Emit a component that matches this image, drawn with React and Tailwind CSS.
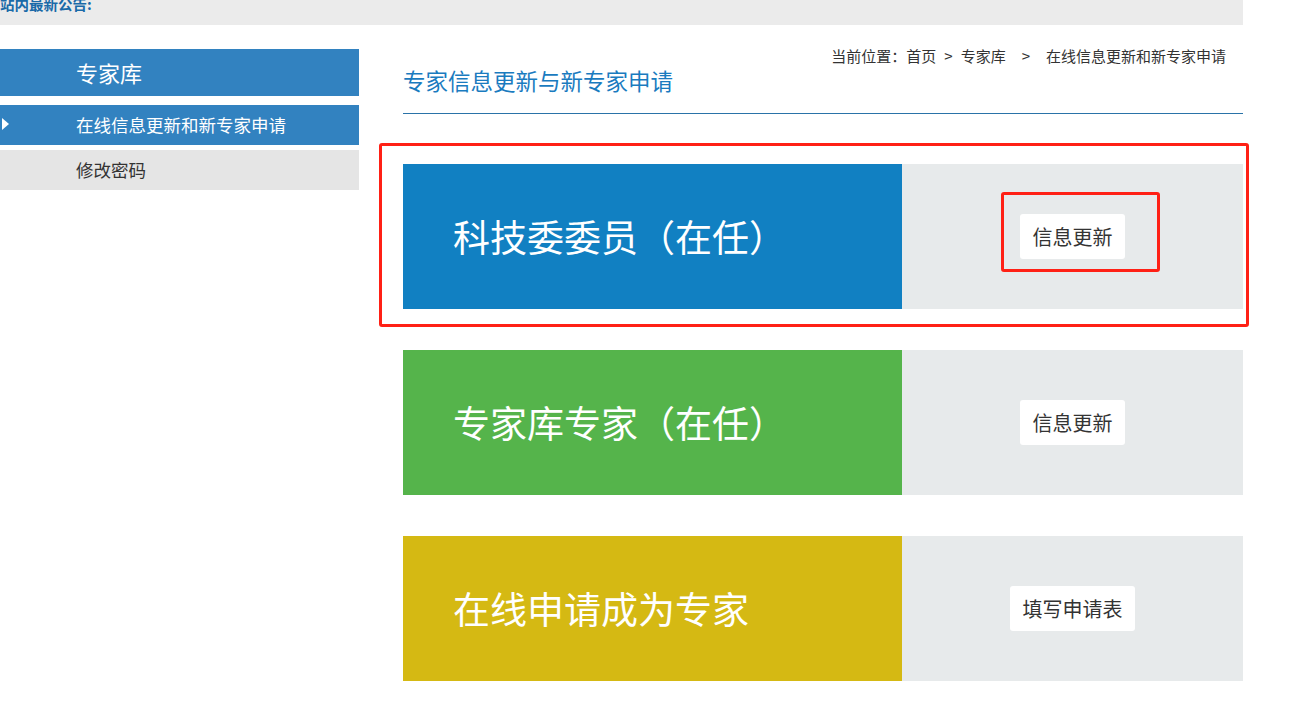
export default function App() {
  const font = { fontFamily: '"Microsoft YaHei", "Noto Sans CJK SC", "Noto Sans", sans-serif' };
  const cards = [
    { title: "科技委委员（在任）", color: "bg-[#1180c2]", btn: "信息更新", bw: "w-[105px]" },
    { title: "专家库专家（在任）", color: "bg-[#55b44b]", btn: "信息更新", bw: "w-[105px]" },
    { title: "在线申请成为专家", color: "bg-[#d5b913]", btn: "填写申请表", bw: "w-[125px]" },
  ];
  return (
    <div className="w-[1306px] h-[717px] bg-white overflow-hidden relative" style={font}>
      {/* top notice bar */}
      <div className="w-[1243px] h-[25px] bg-[#ebebeb] overflow-hidden">
        <div className="text-[14.5px] font-bold text-[#1a6aa8] leading-[14px] -mt-[3px]">站内最新公告:</div>
      </div>

      <div className="flex mt-[24px]">
        {/* sidebar */}
        <div className="w-[359px] shrink-0 flex flex-col">
          <div className="h-[47px] bg-[#3282c0] text-white text-[22px] flex items-center pl-[76px]">专家库</div>
          <div className="h-[40px] mt-[9px] bg-[#3282c0] text-white text-[17.5px] flex items-center relative pl-[76px]">
            <span className="absolute left-[2px] top-[13px] w-0 h-0 border-y-[6px] border-y-transparent border-l-[7px] border-l-white"></span>
            在线信息更新和新专家申请
          </div>
          <div className="h-[40px] mt-[5px] bg-[#e5e5e5] text-[#333] text-[17.5px] flex items-center pl-[76px]">修改密码</div>
        </div>

        {/* main */}
        <div className="ml-[44px] w-[840px] flex flex-col">
          <div className="relative h-[65px] border-b border-[#2a73a8]">
            <div className="absolute right-[17px] top-[-4px] text-[15px] text-[#333] whitespace-nowrap">
              当前位置：首页<span className="mx-[8px]">&gt;</span>专家库<span className="ml-[16px] mr-[16px]">&gt;</span>在线信息更新和新专家申请
            </div>
            <div className="absolute left-0 top-[15px] text-[22.5px] text-[#1a7bbf]">专家信息更新与新专家申请</div>
          </div>

          <div className="flex flex-col gap-[41px] mt-[50px]">
            {cards.map((c, i) => (
              <div key={i} className="flex h-[145px]">
                <div className={`w-[499px] ${c.color} text-white text-[37px] flex items-center pl-[50px]`}>{c.title}</div>
                <div className="flex-1 bg-[#e7eaeb] flex items-center justify-center">
                  <div className={`${c.bw} h-[45px] bg-white rounded-[3px] text-[20px] text-[#333] flex items-center justify-center`}>{c.btn}</div>
                </div>
              </div>
            ))}
          </div>
        </div>
      </div>

      {/* annotation boxes */}
      <div className="absolute left-[379px] top-[143px] w-[870px] h-[184px] border-[3px] border-[#ff2015] rounded-[3px]"></div>
      <div className="absolute left-[1001px] top-[192px] w-[159px] h-[80px] border-[3px] border-[#ff2015] rounded-[3px]"></div>
    </div>
  );
}
